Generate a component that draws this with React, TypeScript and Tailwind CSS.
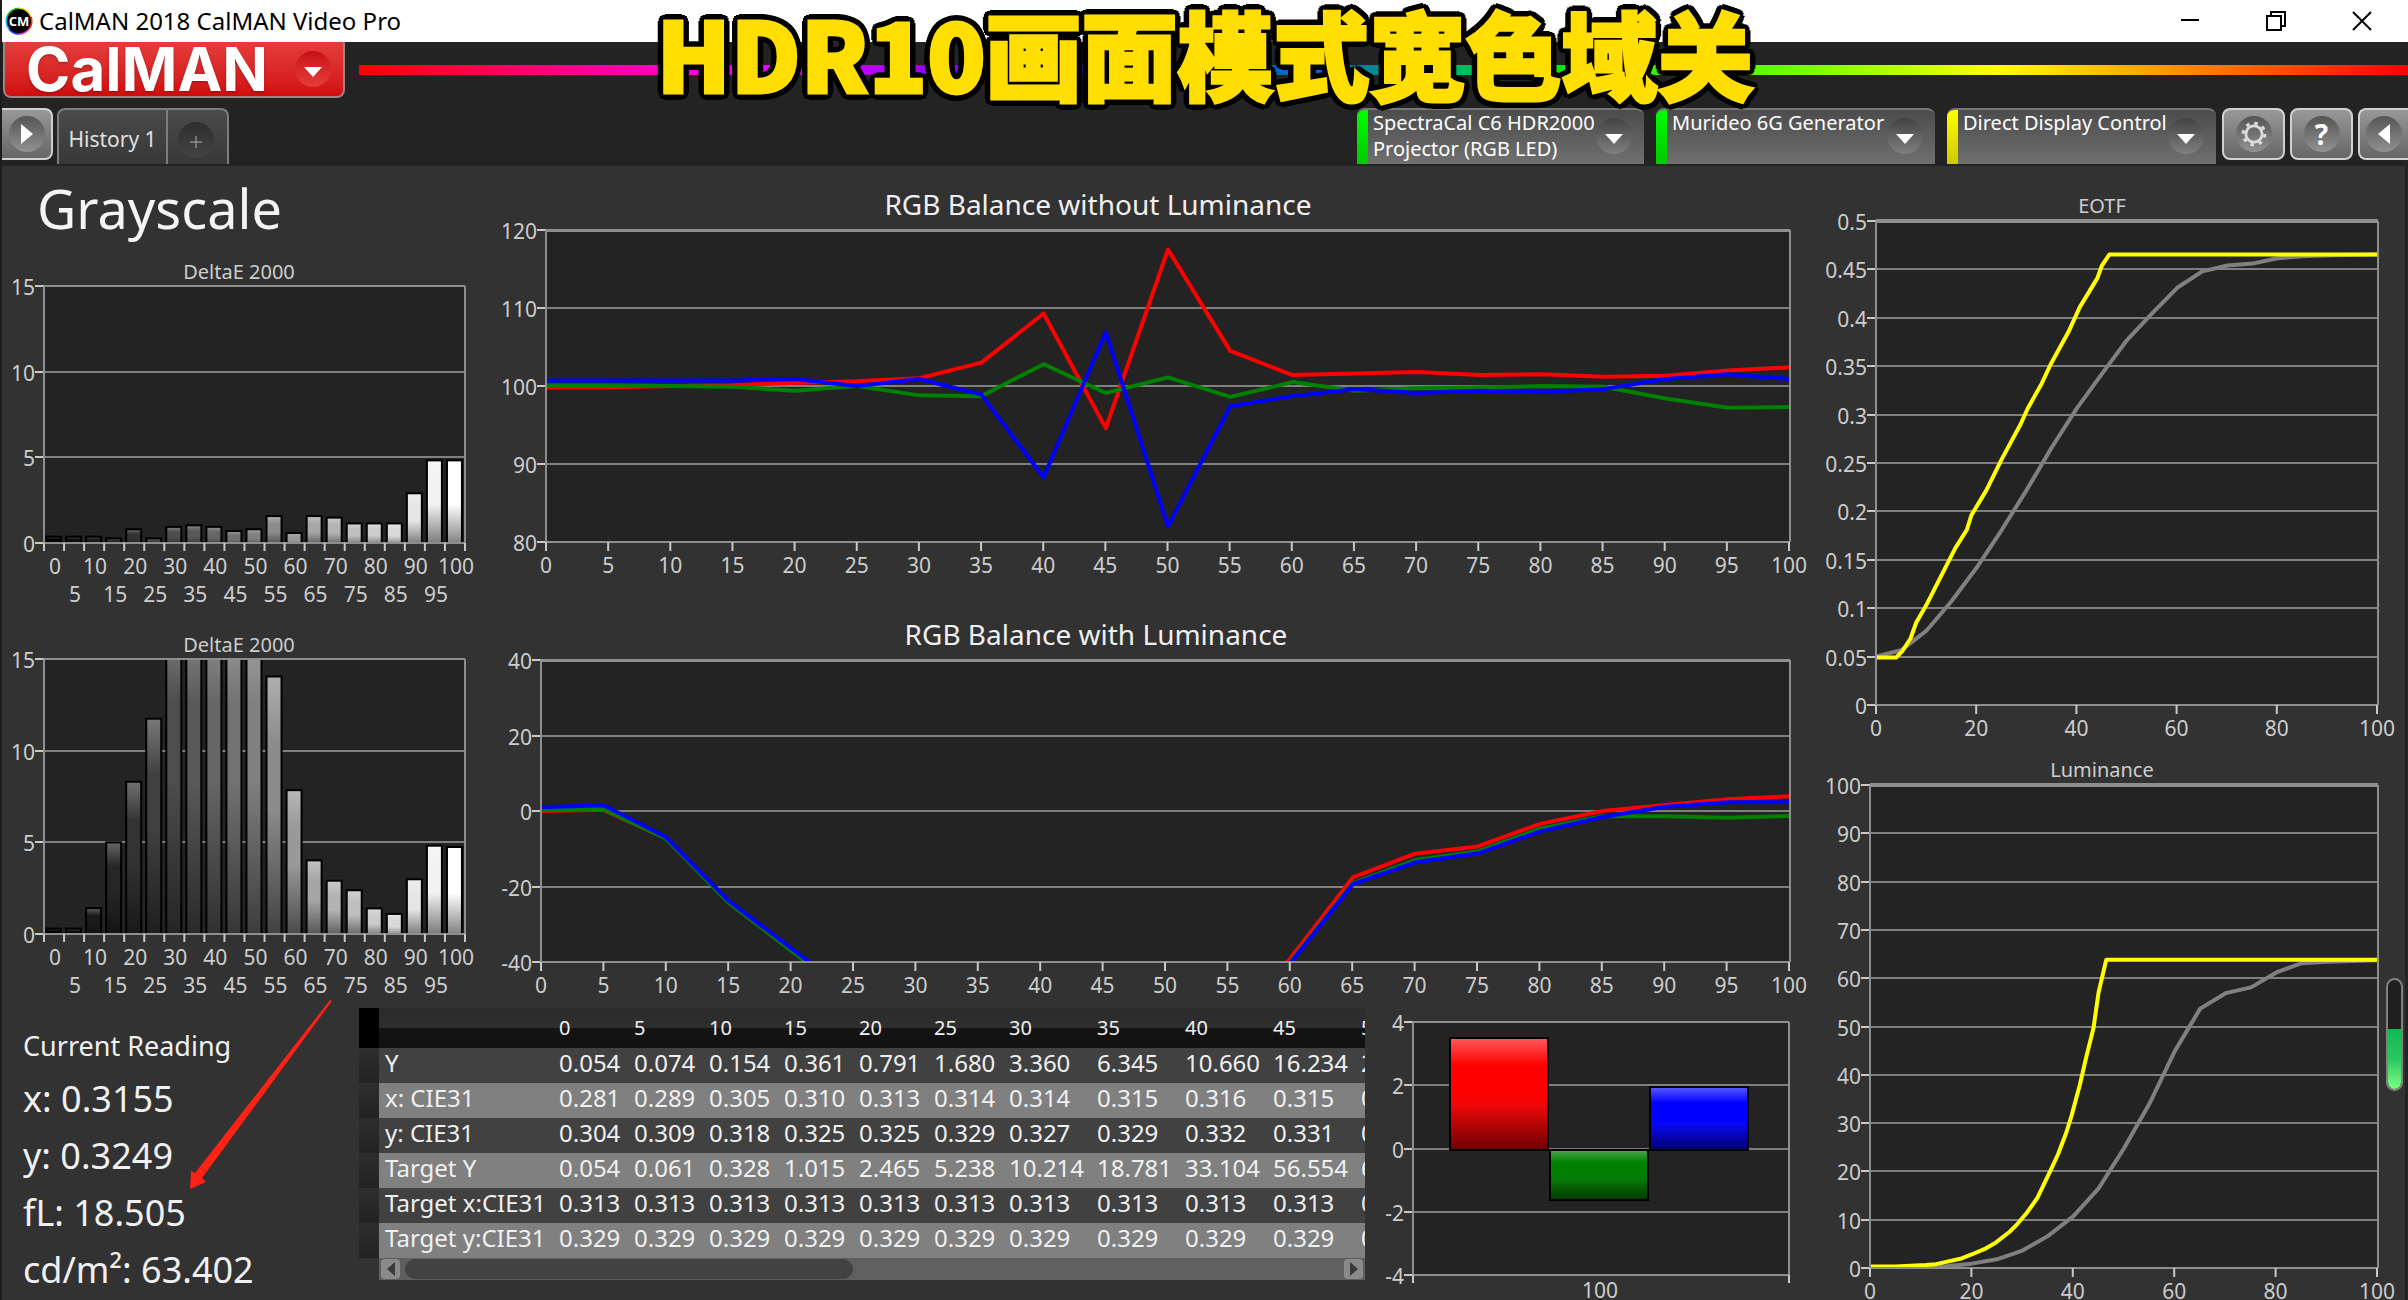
import type { ReactNode } from "react";

const steps = Array.from({ length: 21 }, (_, i) => i * 5);

const deltaA = [0.43, 0.43, 0.43, 0.33, 0.86, 0.33, 1, 1.09, 1, 0.76, 0.86, 1.63, 0.64, 1.63, 1.54, 1.2, 1.2, 1.2, 2.96, 4.88, 4.88];
const deltaB = [0.35, 0.35, 1.47, 5.05, 8.36, 11.8, 17, 17, 17, 17, 17, 14.1, 7.9, 4.07, 2.96, 2.44, 1.45, 1.15, 3.04, 4.87, 4.8];

const balance = {
  red: [99.8, 99.8, 100, 100.1, 100.4, 100.6, 101, 103, 109.3, 94.6, 117.5, 104.5, 101.4, 101.6, 101.8, 101.4, 101.5, 101.2, 101.3, 102, 102.4],
  green: [100.1, 100.1, 100, 99.9, 99.4, 100, 98.8, 98.7, 102.8, 99.1, 101.1, 98.6, 100.5, 99.4, 99.7, 99.8, 100, 99.9, 98.4, 97.2, 97.3],
  blue: [100.7, 100.7, 100.7, 100.7, 100.9, 100, 100.9, 98.9, 88.3, 106.9, 82, 97.4, 98.7, 99.6, 99.1, 99.4, 99.2, 99.6, 100.9, 101.5, 100.9],
};

const balanceLum = {
  red: [0, 0.3, -7.2, -24, -36.8, -49.3, -60, -70, -80, -80, -70, -60, -39, -17.6, -11.3, -9.4, -3.4, 0, 1.6, 3.1, 3.9],
  green: [0.5, 0.5, -7.3, -24.2, -36.9, -49.5, -60, -70, -80, -80, -70, -60, -40, -19.1, -13, -10.7, -4.7, -1.4, -1.4, -1.8, -1.3],
  blue: [1, 1.5, -6.9, -23.7, -36.3, -48.8, -60, -70, -80, -80, -70, -60, -40.3, -19.4, -13.6, -11.2, -5.4, -1.6, 1.1, 2.3, 2.3],
};

type Point = [number, number];

const eotfTarget: Point[] = [[0, 0.049], [4, 0.049], [5.3, 0.056], [6.9, 0.069], [8, 0.085], [10, 0.103], [15.8, 0.162], [18.1, 0.181], [19, 0.196], [22, 0.222], [25, 0.2535], [28.8, 0.29], [30.2, 0.306], [33, 0.332], [34.8, 0.352], [38.3, 0.385], [40.6, 0.411], [44.1, 0.441], [45, 0.454], [46.5, 0.4655], [100, 0.4655]];
const eotfMeasured: Point[] = [[0, 0.05], [5, 0.0565], [10, 0.0765], [15, 0.107], [20, 0.1415], [25, 0.1805], [30, 0.222], [35, 0.266], [40, 0.3065], [45, 0.342], [50, 0.377], [55, 0.4045], [60, 0.431], [65, 0.448], [70, 0.454], [75, 0.456], [80, 0.4615], [85, 0.4637], [92, 0.465], [100, 0.4655]];
const lumTarget: Point[] = [[0, 0.3], [5, 0.3], [11, 0.6], [13, 0.8], [17.8, 1.9], [20, 2.8], [22.5, 3.9], [24.8, 5.3], [27.5, 7.5], [29, 9.1], [31, 11.6], [33, 14.6], [35.5, 20.1], [37, 23.5], [38.6, 27.9], [39.7, 31.6], [41.3, 37.9], [42.6, 43.8], [44, 49.7], [45, 57.1], [46.5, 63.8], [100, 63.8]];
const lumMeasured: Point[] = [[0, 0.05], [10, 0.15], [15, 0.36], [20, 0.9], [25, 1.8], [30, 3.6], [35, 6.6], [40, 10.7], [45, 16.5], [50, 24.8], [55, 34], [60, 44.9], [65, 53.7], [70, 56.9], [75, 58.1], [80, 61.2], [85, 63.1], [90, 63.4], [100, 63.7]];

const columns = ["0", "5", "10", "15", "20", "25", "30", "35", "40", "45", "50"];
const rows = [
  { name: "Y", values: ["0.054", "0.074", "0.154", "0.361", "0.791", "1.680", "3.360", "6.345", "10.660", "16.234", "24.812"] },
  { name: "x: CIE31", values: ["0.281", "0.289", "0.305", "0.310", "0.313", "0.314", "0.314", "0.315", "0.316", "0.315", "0.317"] },
  { name: "y: CIE31", values: ["0.304", "0.309", "0.318", "0.325", "0.325", "0.329", "0.327", "0.329", "0.332", "0.331", "0.333"] },
  { name: "Target Y", values: ["0.054", "0.061", "0.328", "1.015", "2.465", "5.238", "10.214", "18.781", "33.104", "56.554", "63.402"] },
  { name: "Target x:CIE31", values: ["0.313", "0.313", "0.313", "0.313", "0.313", "0.313", "0.313", "0.313", "0.313", "0.313", "0.313"] },
  { name: "Target y:CIE31", values: ["0.329", "0.329", "0.329", "0.329", "0.329", "0.329", "0.329", "0.329", "0.329", "0.329", "0.329"] },
];

type ChartProps = {
  id: string;
  width: number;
  height: number;
  box: [number, number, number, number]; // left, top, right, bottom
  yRange: [number, number];
  yTicks: number[];
  title?: string;
  titleX?: number;
  titleY?: number;
  bigTitle?: boolean;
  topWidth?: number;
  xAxis?: ReactNode;
  children: ReactNode;
};

const Chart = ({ id, width, height, box, yRange, yTicks, title, titleX, titleY, bigTitle, topWidth = 2, xAxis, children }: ChartProps) => {
  const [left, top, right, bottom] = box;
  const y = (v: number) => Math.round(bottom - ((v - yRange[0]) / (yRange[1] - yRange[0])) * (bottom - top));
  return (
    <svg viewBox={`0 0 ${width} ${height}`} className="block h-auto w-full overflow-visible" role="img" aria-label={title}>
      <clipPath id={id}>
        <rect x={left} y={top} width={right - left} height={bottom - top} />
      </clipPath>
      {title && (
        <text x={titleX} y={titleY} textAnchor="middle" className={bigTitle ? "fill-[#f0f0f0] text-[28px]" : "fill-[#cdcdcd] text-[20px]"}>
          {title}
        </text>
      )}
      <rect x={left} y={top} width={right - left} height={bottom - top} className="fill-[#232323]" />
      {yTicks.map((v) => (
        <g key={v}>
          <line x1={left} x2={right} y1={y(v)} y2={y(v)} strokeWidth="2" className="stroke-[#7f7f7f]" shapeRendering="crispEdges" />
          <line x1={left - 9} x2={left} y1={y(v)} y2={y(v)} strokeWidth="2" className="stroke-[#c8c8c8]" shapeRendering="crispEdges" />
          <text x={left - 9} y={y(v) + 9} textAnchor="end" className="fill-[#cdcdcd] text-[21px]">{v}</text>
        </g>
      ))}
      <g clipPath={`url(#${id})`}>{children}</g>
      <g className="stroke-[#8e8e8e]" strokeWidth="2" shapeRendering="crispEdges">
        <line x1={left} x2={right} y1={top} y2={top} strokeWidth={topWidth} />
        <line x1={left} x2={left} y1={top} y2={bottom} />
        <line x1={right} x2={right} y1={top} y2={bottom} />
        <line x1={left} x2={right} y1={bottom} y2={bottom} />
      </g>
      {xAxis}
    </svg>
  );
};

const XAxis = ({ left, right, bottom, ticks }: { left: number; right: number; bottom: number; ticks: number[] }) => (
  <g>
    {ticks.map((t) => {
      const x = left + (t / 100) * (right - left);
      return (
        <g key={t}>
          <line x1={x} x2={x} y1={bottom} y2={bottom + 9} strokeWidth="2" className="stroke-[#c8c8c8]" />
          <text x={x} y={bottom + 31} textAnchor="middle" className="fill-[#cdcdcd] text-[21px]">{t}</text>
        </g>
      );
    })}
  </g>
);

const Line = ({ points, box, yRange, color }: { points: Point[]; box: number[]; yRange: number[]; color: string }) => {
  const [left, top, right, bottom] = box;
  const d = points
    .map(([px, py]) => `${left + (px / 100) * (right - left)},${bottom - ((py - yRange[0]) / (yRange[1] - yRange[0])) * (bottom - top)}`)
    .join(" ");
  return <polyline points={d} fill="none" stroke={color} strokeWidth="4" strokeLinejoin="round" />;
};

const DeltaChart = ({ id, height, top, bottom, values }: { id: string; height: number; top: number; bottom: number; values: number[] }) => {
  const left = 42;
  const right = 463;
  const band = (right - left) / 21;
  return (
    <Chart
      id={id}
      width={482}
      height={height}
      box={[left, top, right, bottom]}
      yRange={[0, 15]}
      yTicks={[0, 5, 10, 15]}
      title="DeltaE 2000"
      titleX={237}
      titleY={top - 7}
      xAxis={
        <g>
          {[...steps, 105].map((s, i) => (
            <line key={s} x1={left + i * band} x2={left + i * band} y1={bottom} y2={bottom + 8} strokeWidth="2" className="stroke-[#c8c8c8]" />
          ))}
          {steps.map((s, i) => (
            <text key={s} x={left + 11 + i * band} y={bottom + (i % 2 ? 59 : 31)} textAnchor="middle" className="fill-[#cdcdcd] text-[21px]">{s}</text>
          ))}
        </g>
      }
    >
      {values.map((v, i) => {
        const base = Math.round((i / 20) * 255);
        const light = Math.round(base + (255 - base) * 0.3);
        const dark = Math.round(base * 0.45);
        const h = (v / 15) * (bottom - top);
        return (
          <g key={i}>
            <linearGradient id={`${id}-${i}`} x1="0" y1="0" x2="0" y2="1">
              <stop offset="0" stopColor={`rgb(${light},${light},${light})`} />
              <stop offset="0.25" stopColor={`rgb(${base},${base},${base})`} />
              <stop offset="0.5" stopColor={`rgb(${base},${base},${base})`} />
              <stop offset="1" stopColor={`rgb(${dark},${dark},${dark})`} />
            </linearGradient>
            <rect x={left + 2 + i * band} y={bottom - h + 1} width="15" height={h + 4} fill={`url(#${id}-${i})`} stroke="#000" strokeWidth="2" />
          </g>
        );
      })}
    </Chart>
  );
};

const BalanceChart = ({ id, height, box, yRange, yTicks, title, titleX, data }: {
  id: string;
  height: number;
  box: [number, number, number, number];
  yRange: [number, number];
  yTicks: number[];
  title: string;
  titleX: number;
  data: { red: number[]; green: number[]; blue: number[] };
}) => (
  <Chart
    id={id}
    width={1322}
    height={height}
    box={box}
    yRange={yRange}
    yTicks={yTicks}
    title={title}
    titleX={titleX}
    titleY={box[1] - 15}
    bigTitle
    topWidth={3}
    xAxis={<XAxis left={box[0]} right={box[2] - 1} bottom={box[3]} ticks={steps} />}
  >
    <Line points={data.red.map((v, i) => [i * 5, v])} box={box} yRange={yRange} color="#ff0000" />
    <Line points={data.green.map((v, i) => [i * 5, v])} box={box} yRange={yRange} color="#008000" />
    <Line points={data.blue.map((v, i) => [i * 5, v])} box={box} yRange={yRange} color="#0000ff" />
  </Chart>
);

const CurveChart = ({ id, height, box, yRange, yTicks, title, measured, target }: {
  id: string;
  height: number;
  box: [number, number, number, number];
  yRange: [number, number];
  yTicks: number[];
  title: string;
  measured: Point[];
  target: Point[];
}) => (
  <Chart
    id={id}
    width={578}
    height={height}
    box={box}
    yRange={yRange}
    yTicks={yTicks}
    title={title}
    titleX={296}
    titleY={box[1] - 8}
    topWidth={4}
    xAxis={<XAxis left={box[0]} right={box[2] - 1} bottom={box[3]} ticks={[0, 20, 40, 60, 80, 100]} />}
  >
    <Line points={measured} box={box} yRange={yRange} color="#808080" />
    <Line points={target} box={box} yRange={yRange} color="#ffff00" />
  </Chart>
);

const RgbBars = () => (
  <Chart
    id="rgb-bars"
    width={441}
    height={292}
    box={[48, 14, 424, 267]}
    yRange={[-4, 4]}
    yTicks={[4, 2, 0, -2, -4]}
    xAxis={
      <g>
        <line x1="48" x2="48" y1="267" y2="275" strokeWidth="2" className="stroke-[#c8c8c8]" />
        <line x1="424" x2="424" y1="267" y2="275" strokeWidth="2" className="stroke-[#c8c8c8]" />
        <text x="235" y="290" textAnchor="middle" className="fill-[#cdcdcd] text-[21px]">100</text>
      </g>
    }
  >
    {[
      { id: "bar-r", x: 85, y: 30, h: 112, c: ["#ff5a5a", "#ff0000", "#ef0808", "#6c0000"] },
      { id: "bar-g", x: 185, y: 142, h: 50, c: ["#4fa64f", "#008000", "#087808", "#003800"] },
      { id: "bar-b", x: 285, y: 79, h: 63, c: ["#5a5aff", "#0000ff", "#0808ef", "#00006c"] },
    ].map((b) => (
      <g key={b.id}>
        <linearGradient id={b.id} x1="0" y1="0" x2="0" y2="1">
          <stop offset="0" stopColor={b.c[0]} />
          <stop offset="0.25" stopColor={b.c[1]} />
          <stop offset="0.5" stopColor={b.c[1]} />
          <stop offset="0.6" stopColor={b.c[2]} />
          <stop offset="1" stopColor={b.c[3]} />
        </linearGradient>
        <rect x={b.x} y={b.y} width="98" height={b.h} fill={`url(#${b.id})`} stroke="#000" strokeWidth="2" />
      </g>
    ))}
  </Chart>
);

const Caret = () => (
  <svg viewBox="0 0 18 10" className="mt-[6px] h-[10px] w-[18px]">
    <path d="M0 0h18L9 10z" fill="#fff" />
  </svg>
);

const DeviceTab = ({ label, width, stripe }: { label: string; width: string; stripe: string }) => (
  <button className={`flex h-14 overflow-hidden rounded-t-lg border-t-2 border-[#777] bg-linear-to-b from-[#4c4c4c] to-[#707070] text-left ${width}`}>
    <span className={`h-full w-[11px] shrink-0 bg-linear-to-b ${stripe}`} />
    <span className="ml-[5px] min-w-0 flex-1 text-[20px] leading-[26px] whitespace-pre text-white">{label}</span>
    <span className="mt-2 mr-3 flex size-9 shrink-0 items-center justify-center rounded-full bg-linear-to-b from-[#434343] to-[#808080]">
      <Caret />
    </span>
  </button>
);

const RoundButton = ({ label, className, children }: { label: string; className: string; children: ReactNode }) => (
  <button aria-label={label} className={`flex h-[52px] items-center justify-center border-2 border-[#d0d0d0] bg-linear-to-b from-[#989898] to-[#666] ${className}`}>
    <span className="flex size-9 items-center justify-center rounded-full bg-linear-to-b from-[#555] to-[#929292]">{children}</span>
  </button>
);

const TitleBar = () => (
  <div className="flex h-[42px] items-center justify-between bg-white pr-[3px] text-black">
    <div className="flex items-center gap-[6px] pl-[3px]">
      <svg viewBox="0 0 28 28" className="size-7">
        <circle cx="14" cy="14" r="13" fill="#000" />
        <path d="M14 1.2A12.8 12.8 0 0 0 2 10" fill="none" stroke="#19c819" strokeWidth="1.6" />
        <path d="M14 1.2A12.8 12.8 0 0 1 26 10" fill="none" stroke="#e8d820" strokeWidth="1.6" />
        <path d="M26 10a12.8 12.8 0 0 1-3 13" fill="none" stroke="#f03020" strokeWidth="1.6" />
        <path d="M23 23a12.8 12.8 0 0 1-9 4" fill="none" stroke="#e020e0" strokeWidth="1.6" />
        <path d="M14 27A12.8 12.8 0 0 1 4 22" fill="none" stroke="#2030f0" strokeWidth="1.6" />
        <path d="M4 22A12.8 12.8 0 0 1 2 10" fill="none" stroke="#20b8e0" strokeWidth="1.6" />
        <text x="14" y="19" textAnchor="middle" className="fill-white text-[13px] font-bold">CM</text>
      </svg>
      <h2 className="text-[24px] leading-8">CalMAN 2018 CalMAN Video Pro</h2>
    </div>
    <div className="flex">
      <button aria-label="Minimize" className="flex h-[42px] w-[86px] items-center justify-center">
        <svg viewBox="0 0 20 20" className="size-5" fill="none" stroke="#000" strokeWidth="2"><path d="M1 9h18" /></svg>
      </button>
      <button aria-label="Restore" className="flex h-[42px] w-[86px] items-center justify-center">
        <svg viewBox="0 0 20 20" className="size-5" fill="none" stroke="#000" strokeWidth="2"><path d="M1 5h14v14H1zM5 5V1h14v14h-4" /></svg>
      </button>
      <button aria-label="Close" className="flex h-[42px] w-[86px] items-center justify-center">
        <svg viewBox="0 0 20 20" className="size-5" fill="none" stroke="#000" strokeWidth="2"><path d="M1 1l18 18M19 1L1 19" /></svg>
      </button>
    </div>
  </div>
);

const Toolbar = () => (
  <div className="bg-[#232323] pb-[2px]">
    <div className="flex items-center">
      <button className="ml-px flex h-14 w-[342px] items-center rounded-b-lg border-2 border-t-0 border-[#9a8484] bg-linear-to-b from-[#e43c3c] to-[#d00c0c] pl-[21px]">
        <span className="font-[Inter,sans-serif] text-[60px] leading-[54px] font-bold text-white text-shadow-md">CalMAN</span>
        <span className="mr-[12px] ml-auto flex size-9 items-center justify-center rounded-full bg-linear-to-b from-[#c80c14] to-[#e63c3c]">
          <Caret />
        </span>
      </button>
      <div className="ml-[14px] h-[10px] flex-1 bg-[linear-gradient(to_right,#ff0000,#ff00ff_19%,#8000ff_30%,#2020ff_38%,#0068c0_45%,#008c90_50%,#00c850_55%,#10f000_60%,#60ff00_69%,#ffff00_80%,#ff0000)]" />
    </div>

    <div className="mt-[10px] flex items-start">
      <RoundButton label="Open panel" className="w-[51px] rounded-r-lg border-l-0">
        <svg viewBox="0 0 12 20" className="h-5 w-3"><path d="M0 0v20L12 10z" fill="#fff" /></svg>
      </RoundButton>
      <div className="ml-1 flex h-14 w-[172px] rounded-t-lg border-2 border-b-0 border-[#7d7d7d] bg-linear-to-b from-[#4a4a4a] to-[#383838]">
        <button className="w-[109px] border-r-2 border-[#7d7d7d] pt-1 text-[21px] leading-7 text-[#e0e0e0]">History 1</button>
        <button aria-label="Add history" className="mt-[12px] ml-[10px] flex size-9 items-center justify-center rounded-full bg-linear-to-b from-[#2e2e2e] to-[#444]">
          <svg viewBox="0 0 12 12" className="mt-1 size-3" stroke="#8c8c8c" strokeWidth="1.5"><path d="M6 0v12M0 6h12" /></svg>
        </button>
      </div>
      <div className="ml-auto flex items-start gap-3">
        <DeviceTab label={"SpectraCal C6 HDR2000\nProjector (RGB LED)"} width="w-[287px]" stripe="from-[#00ff00] to-[#00c800]" />
        <DeviceTab label="Murideo 6G Generator" width="w-[279px]" stripe="from-[#00ff00] to-[#00c800]" />
        <DeviceTab label="Direct Display Control" width="w-[269px]" stripe="from-[#ffff00] to-[#d0c800]" />
      </div>
      <div className="ml-[6px] flex gap-[5px]">
        <RoundButton label="Settings" className="w-[63px] rounded-lg">
          <svg viewBox="0 0 24 24" className="size-7" fill="none" stroke="#dcdcdc">
            <circle cx="12" cy="12" r="7" strokeWidth="2.4" />
            <circle cx="12" cy="12" r="9.3" strokeWidth="2.6" strokeDasharray="3 4.3" />
          </svg>
        </RoundButton>
        <RoundButton label="Help" className="w-[63px] rounded-lg">
          <span className="text-[28px] leading-8 font-bold text-white">?</span>
        </RoundButton>
        <RoundButton label="Close panel" className="w-[50px] rounded-l-lg border-r-0">
          <svg viewBox="0 0 12 20" className="h-5 w-3"><path d="M12 0v20L0 10z" fill="#fff" /></svg>
        </RoundButton>
      </div>
    </div>
  </div>
);

const Reading = () => (
  <section className="relative pt-[18px] pl-[21px] text-[36px] leading-[57px] text-[#f0f0f0]">
    <h3 className="mb-1 text-[27px] leading-10">Current Reading</h3>
    <p>x: 0.3155</p>
    <p>y: 0.3249</p>
    <p>fL: 18.505</p>
    <p>cd/m²: 63.402</p>
    <svg viewBox="0 0 150 200" className="absolute -top-[10px] left-[184px] h-[200px] w-[150px]">
      <path d="M144 2L146 3 16 180 20 184 4 191 5 173 9 175z" fill="#ff2114" />
    </svg>
  </section>
);

const DataTable = () => (
  <div className="overflow-hidden">
    <table className="w-[1085px] table-fixed border-collapse text-left text-[24px] text-[#f0f0f0]">
      <colgroup>
        <col className="w-[20px]" />
        <col className="w-[175px]" />
        {columns.map((c, i) => (
          <col key={c} className={i < 6 ? "w-[75px]" : "w-[88px]"} />
        ))}
      </colgroup>
      <thead>
        <tr className="h-10 bg-[linear-gradient(#2b2b2b,#2e2e2e_50%,#141414_50%,#101010)] text-[20px]">
          <th className="bg-black" />
          <th />
          {columns.map((c) => (
            <th key={c} className="pl-[5px] leading-7 font-normal">{c}</th>
          ))}
        </tr>
      </thead>
      <tbody>
        {rows.map((r) => (
          <tr key={r.name} className="h-[35px] align-top leading-[30px] odd:bg-[#414141] even:bg-[#808080]">
            <td className="bg-linear-to-b from-[#2e2e2e] to-[#222]" />
            <th className="pl-[6px] font-normal whitespace-nowrap">{r.name}</th>
            {r.values.map((v, i) => (
              <td key={i} className="pl-[5px]">{v}</td>
            ))}
          </tr>
        ))}
      </tbody>
    </table>
    <div className="ml-5 flex h-[22px] items-center justify-between bg-[#5f5f5f] px-[2px]">
      <button aria-label="Scroll left" className="flex h-5 w-[19px] items-center justify-center rounded-sm bg-[#8a8a8a]">
        <svg viewBox="0 0 8 14" className="h-[14px] w-2"><path d="M8 0v14L0 7z" fill="#3a3a3a" /></svg>
      </button>
      <div className="flex-1 px-[5px]">
        <div className="h-5 w-[48%] rounded-full bg-[#424242]" />
      </div>
      <button aria-label="Scroll right" className="flex h-5 w-[19px] items-center justify-center rounded-sm bg-[#8a8a8a]">
        <svg viewBox="0 0 8 14" className="h-[14px] w-2"><path d="M0 0v14l8-7z" fill="#3a3a3a" /></svg>
      </button>
    </div>
  </div>
);

const App = () => {
  return (
    <div className="relative min-h-screen overflow-hidden border-l-2 border-[#1c1c1c] bg-[#323232] font-['Noto_Sans','Noto_Sans_CJK_SC',sans-serif]">
      <TitleBar />
      <Toolbar />

      {/* CAPTION */}
      <p className="pointer-events-none absolute top-0 left-1/2 -translate-x-1/2 font-['Noto_Sans_CJK_SC',sans-serif] text-[96px] leading-[104px] font-black whitespace-nowrap text-[#ffde00] [-webkit-text-stroke:3px_#ffde00] [text-shadow:7px_0_#000,-7px_0_#000,0_7px_#000,0_-7px_#000,5px_5px_#000,-5px_5px_#000,5px_-5px_#000,-5px_-5px_#000,6px_3px_#000,-6px_3px_#000,6px_-3px_#000,-6px_-3px_#000,3px_6px_#000,-3px_6px_#000,3px_-6px_#000,-3px_-6px_#000]">
        HDR10画面模式宽色域关
      </p>

      <main className="grid grid-cols-[1804fr_599fr] border-r-[3px] border-[#232323]">
        <div>
          <div className="grid grid-cols-[482fr_1322fr]">
            <div>
              <h1 className="pl-[35px] text-[54px] leading-[84px] text-[#f4f4f4]">Grayscale</h1>
              <DeltaChart id="delta-a" height={375} top={36} bottom={293} values={deltaA} />
              <DeltaChart id="delta-b" height={383} top={34} bottom={309} values={deltaB} />
            </div>
            <div>
              <BalanceChart id="bal-a" height={434} box={[62, 64, 1306, 376]} yRange={[80, 120]} yTicks={[120, 110, 100, 90, 80]} title="RGB Balance without Luminance" titleX={614} data={balance} />
              <BalanceChart id="bal-b" height={408} box={[57, 60, 1306, 362]} yRange={[-40, 40]} yTicks={[40, 20, 0, -20, -40]} title="RGB Balance with Luminance" titleX={612} data={balanceLum} />
            </div>
          </div>
          <div className="grid grid-cols-[357fr_1006fr_441fr]">
            <Reading />
            <DataTable />
            <RgbBars />
          </div>
        </div>

        <div className="grid grid-cols-[578fr_21fr]">
          <div>
            <CurveChart id="eotf" height={584} box={[70, 55, 572, 539]} yRange={[0, 0.5]} yTicks={[0.5, 0.45, 0.4, 0.35, 0.3, 0.25, 0.2, 0.15, 0.1, 0.05, 0]} title="EOTF" measured={eotfMeasured} target={eotfTarget} />
            <CurveChart id="lum" height={550} box={[64, 35, 572, 518]} yRange={[0, 100]} yTicks={[100, 90, 80, 70, 60, 50, 40, 30, 20, 10, 0]} title="Luminance" measured={lumMeasured} target={lumTarget} />
          </div>
          {/* LEVEL METER */}
          <div className="mx-auto mt-[812px] flex h-[113px] w-[17px] flex-col justify-end overflow-hidden rounded-full border-2 border-[#808080] bg-[#1f1f1f]">
            <div className="h-[60px] bg-linear-to-b from-[#10b850] via-[#28c860] to-[#78ff80]" />
          </div>
        </div>
      </main>
    </div>
  );
};
export default App;
